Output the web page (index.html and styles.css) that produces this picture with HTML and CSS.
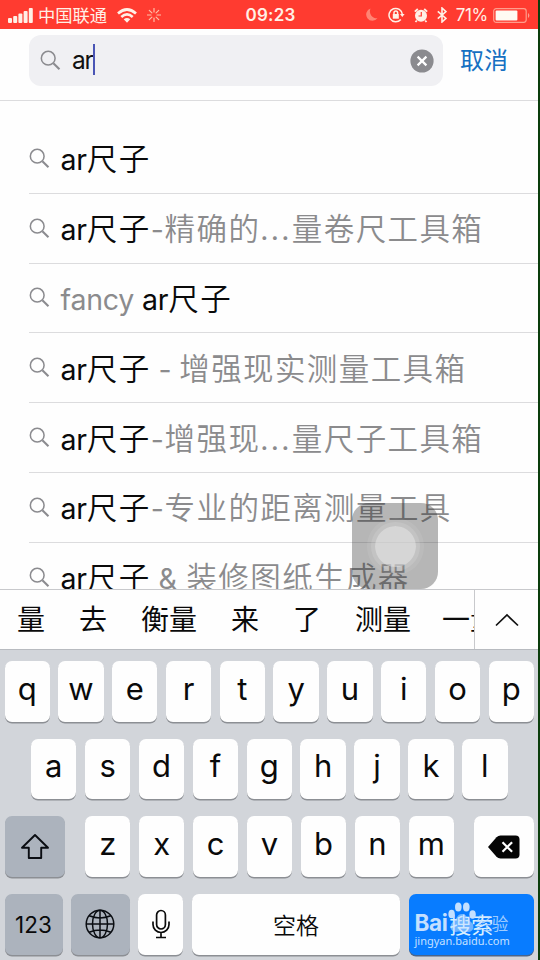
FILE: index.html
```html
<!DOCTYPE html>
<html lang="zh-CN">
<head>
<meta charset="utf-8">
<title>搜索</title>
<link rel="stylesheet" href="styles.css">
</head>
<body>
<svg class="defs" width="0" height="0"><symbol id="mag" viewBox="0 0 22 22"><circle cx="8.600" cy="8.600" r="7.200" fill="none" stroke="#8b8b8f" stroke-width="1.600"/><path d="M14 14l6.400 6.200" stroke="#8b8b8f" stroke-width="2.200" fill="none"/></symbol></svg>
<div class="phone">
  <header class="status">
    <div class="left">
      <svg class="signal" width="25" height="15" viewBox="0 0 25 15" fill="#fff0e6"><rect x="0" y="10" width="4" height="5" rx="1"/><rect x="5.200" y="8" width="4" height="7" rx="1"/><rect x="10.400" y="5.500" width="4" height="9.500" rx="1"/><rect x="15.600" y="3" width="4" height="12" rx="1"/><rect x="20.800" y="0" width="4" height="15" rx="1"/></svg>
      <span class="carrier">中国联通</span>
      <svg class="wifi" width="20" height="15" viewBox="0 0 20 15" fill="none" stroke="#fff0e6" stroke-width="2.700"><path d="M1 5.500Q10-2.500 19 5.500M4.300 8.900Q10 4 15.700 8.900"/><path d="M6.700 11.300Q10 8.600 13.300 11.300L10 14.800z" fill="#fff0e6" stroke="none"/></svg>
      <svg class="spin" width="14" height="14" viewBox="-7 -7 14 14" stroke="#ffc0a8" stroke-width="1.200" stroke-linecap="round"><path d="M0-3V-6.500M0 3V6.500M3 0H6.500M-3 0H-6.500M2.100-2.100L4.700-4.700M-2.100 2.100L-4.700 4.700M2.100 2.100L4.700 4.700M-2.100-2.100L-4.700-4.700"/></svg>
    </div>
    <div class="time">09:23</div>
    <div class="right">
      <svg class="moon" width="13" height="14" viewBox="0 0 13 14"><path d="M5.500.5A6.300 6.300 0 1 0 12.500 10.300A7 7 0 0 1 5.500.5z" fill="#ff8474"/></svg>
      <svg class="lock" width="17" height="16" viewBox="0 0 17 16" fill="none" stroke="#fff0e6" stroke-width="1.500"><path d="M12.800 12.500A6.700 6.700 0 1 1 14.400 7.500"/><path d="M12 7h4.600l-2.300 3z" fill="#fff0e6" stroke="none"/><rect x="4.800" y="7" width="6" height="4.700" fill="#fff0e6" stroke="none"/><path d="M6 7.300V5.700a1.800 1.800 0 0 1 3.600 0V7.300"/></svg>
      <svg class="alarm" width="14" height="15" viewBox="0 0 14 15"><circle cx="7" cy="7.800" r="6" fill="#fff0e6"/><path d="M.8 3.700L3.800 1M13.200 3.700L10.200 1M2.800 12.500L1.500 14M11.200 12.500L12.500 14" stroke="#fff0e6" stroke-width="1.800"/><path d="M7.300 4V8H4.500" fill="none" stroke="#ff3b30" stroke-width="1.200"/></svg>
      <svg class="bt" width="10" height="16" viewBox="0 0 10 16" fill="none" stroke="#fff0e6" stroke-width="1.600"><path d="M.8 4.300L9 11.400L5 15V1L9 4.600L.8 11.700"/></svg>
      <span class="pct">71%</span>
      <svg class="batt" width="38" height="15" viewBox="0 0 38 15"><rect x=".7" y=".7" width="32.500" height="13.600" rx="2.500" fill="none" stroke="#ff9d8c" stroke-width="1.200"/><rect x="2.600" y="2.600" width="21.800" height="9.800" rx="1" fill="#fffaf2"/><path d="M35 5a3 3 0 0 1 0 5z" fill="#ff9d8c"/></svg>
    </div>
  </header>
  <div class="search">
    <div class="field">
      <svg class="mag"><use href="#mag"/></svg>
      <span class="query">ar</span><i class="caret"></i>
      <svg class="clear" width="24" height="24" viewBox="0 0 24 24"><circle cx="12" cy="12" r="11.600" fill="#8b8b8f"/><path d="M7.600 7.600l8.800 8.800M16.400 7.600l-8.800 8.800" stroke="#fff" stroke-width="2.200"/></svg>
    </div>
    <div class="cancel">取消</div>
  </div>
  <main class="results">
    <div class="row"><svg class="mag"><use href="#mag"/></svg><p><b>ar<span>尺子</span></b></p></div>
    <div class="row"><svg class="mag"><use href="#mag"/></svg><p><b>ar<span>尺子</span></b><em class="dash">-</em><span>精确的</span><em class="dots">...</em><span>量卷尺工具箱</span></p></div>
    <div class="row"><svg class="mag"><use href="#mag"/></svg><p><em class="word">fancy</em> <b>ar<span>尺子</span></b></p></div>
    <div class="row"><svg class="mag"><use href="#mag"/></svg><p><b>ar<span>尺子</span></b> <em>-</em> <span>增强现实测量工具箱</span></p></div>
    <div class="row"><svg class="mag"><use href="#mag"/></svg><p><b>ar<span>尺子</span></b><em class="dash">-</em><span>增强现</span><em class="dots">...</em><span>量尺子工具箱</span></p></div>
    <div class="row"><svg class="mag"><use href="#mag"/></svg><p><b>ar<span>尺子</span></b><em class="dash">-</em><span>专业的距离测量工具</span></p></div>
    <div class="row"><svg class="mag"><use href="#mag"/></svg><p><b>ar<span>尺子</span></b> <em class="amp">&amp;</em> <span>装修图纸生成器</span></p></div>
  </main>
  <div class="candidates">
    <div class="words"><span>量</span><span>去</span><span>衡量</span><span>来</span><span>了</span><span>测量</span><span class="last">一量</span></div>
    <div class="expand"><svg width="24" height="14" viewBox="0 0 24 14" fill="none" stroke="#111" stroke-width="1.700"><path d="M1 12.500L12 2L23 12.500"/></svg></div>
  </div>
  <div class="keyboard">
    <div class="keys"><div class="key">q</div><div class="key">w</div><div class="key">e</div><div class="key">r</div><div class="key">t</div><div class="key">y</div><div class="key">u</div><div class="key">i</div><div class="key">o</div><div class="key">p</div></div>
    <div class="keys home"><div class="key">a</div><div class="key">s</div><div class="key">d</div><div class="key">f</div><div class="key">g</div><div class="key">h</div><div class="key">j</div><div class="key">k</div><div class="key">l</div></div>
    <div class="keys lower">
      <div class="key dark shift"><svg width="30" height="27" viewBox="0 0 30 27" fill="none" stroke="#0a0d12" stroke-width="1.900" stroke-linejoin="round"><path d="M15 2L28 14.800H21.200V25H8.800V14.800H2z"/></svg></div>
      <div class="key">z</div><div class="key">x</div><div class="key">c</div><div class="key">v</div><div class="key">b</div><div class="key">n</div><div class="key">m</div>
      <div class="key del"><svg width="32" height="24" viewBox="0 0 32 24"><path d="M0 12L8.500 2.200Q10.200.5 12.500.5H27.500Q31.500.5 31.500 4.500V19.500Q31.500 23.500 27.500 23.500H12.500Q10.200 23.500 8.500 21.800z" fill="#050505"/><path d="M14.500 7.200l9.600 9.600M24.100 7.200l-9.600 9.600" stroke="#fff" stroke-width="2.200"/></svg></div>
    </div>
    <div class="keys bottom">
      <div class="key dark num">123</div>
      <div class="key dark globe"><svg width="30" height="30" viewBox="0 0 30 30" fill="none" stroke="#0a0d12" stroke-width="1.500"><circle cx="15" cy="15" r="13.800"/><ellipse cx="15" cy="15" rx="7.500" ry="13.800"/><path d="M15 1V29M1 15H29M4.200 6.800Q15 11.200 25.800 6.800M4.200 23.200Q15 18.800 25.800 23.200"/></svg></div>
      <div class="key mic"><svg width="18" height="30" viewBox="0 0 18 30" fill="none" stroke="#0a0a0a" stroke-width="1.700"><rect x="4.600" y="1.500" width="8.800" height="18.500" rx="4.400"/><path d="M1 12.500V15.500a8 8 0 0 0 16 0V12.500M9 23.500V28.500M4 28.500H14"/></svg></div>
      <div class="key space">空格</div>
      <div class="key go">搜索
        <div class="mark">
          <div class="brand"><span>Bai</span><svg width="28" height="31" viewBox="0 0 28 31" fill="#c4e0ff"><ellipse cx="3.600" cy="12" rx="3.200" ry="4.300"/><ellipse cx="10.300" cy="5" rx="3.300" ry="4.600"/><ellipse cx="18.300" cy="5" rx="3.300" ry="4.600"/><ellipse cx="24.600" cy="12.500" rx="3.200" ry="4.300"/><path d="M14 12c5 0 5 5 9 8s3 10-3 10c-4 0-8-1-12 0c-6 0-7-7-3-10s4-8 9-8z" opacity=".55"/></svg><span class="cn">经验</span></div>
          <div class="url">jingyan.baidu.com</div>
        </div>
      </div>
    </div>
  </div>
  <div class="assist"><i></i></div>
</div>
</body>
</html>
```
FILE: styles.css
```css
* { box-sizing: border-box; }
body { margin: 0; background: #0b3d0c; font-family: Inter, "Noto Sans CJK SC", sans-serif; }
.defs { position: absolute; }
svg { display: block; flex: none; }
.phone { position: relative; width: 538px; height: 960px; background: #fefefe; overflow: hidden; display: flex; flex-direction: column; }

.status { height: 29px; flex: none; background: #ff3b30; color: #fff0e6; display: grid; grid-template-columns: 200px 1fr 200px; align-items: center; font-size: 17px; }
.left { display: flex; align-items: center; padding-left: 8px; }
.carrier { margin-left: 5px; font-size: 17.3px; line-height: 29px; padding-top: 1px; }
.wifi { margin-left: 10px; }
.spin { margin-left: 10px; }
.time { text-align: center; font-weight: 600; font-size: 17px; letter-spacing: .2px; padding-left: 3px; }
.right { display: flex; align-items: center; justify-content: flex-end; padding-right: 7px; }
.lock { margin-left: 10px; }
.alarm { margin-left: 9px; }
.bt { margin-left: 9px; }
.pct { margin-left: 9px; font-size: 17px; letter-spacing: -.3px; }
.batt { margin-left: 5px; }

.search { height: 72px; flex: none; border-bottom: 1px solid #dcdcde; padding: 6px 0 0 29px; display: flex; }
.field { width: 414px; height: 51px; border-radius: 12px; background: #f0f0f3; display: flex; align-items: center; padding: 0 9px 0 11px; }
.field .mag { width: 21px; height: 21px; }
.query { font-size: 24.5px; letter-spacing: -1.2px; margin-left: 11px; margin-top: -2px; color: #111; }
.caret { width: 2.5px; height: 31px; background: #4a55b5; margin-top: -2px; }
.clear { margin-left: auto; }
.cancel { margin-left: 17px; line-height: 51px; font-size: 24px; color: #1670c2; }

.results { height: 488px; flex: none; overflow: hidden; padding: 23px 0 0 29px; }
.row { height: 69.8px; border-bottom: 1px solid #dcdcde; display: flex; align-items: center; }
.row .mag { width: 21px; height: 21px; margin-left: -.5px; }
.row p { margin: 3px 0 0 11px; font-size: 28.5px; line-height: 60px; letter-spacing: -.2px; color: #8b8b8d; white-space: nowrap; font-weight: 400; }
.row b { font-weight: 400; color: #0a0a0a; }
.row span { font-size: 30.500px; letter-spacing: 1.400px; font-weight: 350; }
.row em { font-style: normal; }
.row em.word { letter-spacing: -.2px; }
.row em.dash { padding-right: 1px; }
.row em.amp { padding-right: 2px; }
.row em.dots { letter-spacing: 2.300px; }

.candidates { height: 60px; flex: none; border-top: 1px solid #c8c9cc; background: #fefefe; display: flex; }
.words { width: 475px; padding-left: 17px; display: flex; gap: 34px; overflow: hidden; font-size: 28px; line-height: 61px; color: #0a0a0a; white-space: nowrap; border-right: 1px solid #c8c9cc; }
.last { margin-left: -3px; }
.expand { flex: 1; display: flex; align-items: center; justify-content: center; }

.keyboard { flex: 1; background: #d2d5da; border-top: 1px solid #b8bbc0; padding: 11px 4px 0 4.500px; display: flex; flex-direction: column; gap: 17px; }
.keys { display: flex; gap: 8.500px; height: 60.700px; flex: none; }
.home { padding: 0 26.500px; }
.key { flex: 1 1 0; min-width: 0; height: 60.500px; border-radius: 7px; background: #fefefe; box-shadow: 0 1.500px 0 #8c8f94; color: #0a0a0a; display: flex; align-items: center; justify-content: center; font-size: 31px; font-weight: 400; padding-bottom: 6px; }
.dark { background: #acb3bd; }
.shift, .del { flex: 0 0 60px; padding-bottom: 0; }
.shift { margin-right: 12px; }
.del { margin-left: 11.500px; padding-left: 1px; }
.num { flex: 0 0 58px; font-size: 22.500px; font-weight: 400; padding: 1px 0 0; }
.globe { flex: 0 0 58.700px; padding: 0; }
.mic { flex: 0 0 45.300px; padding: 0; }
.space { font-size: 23px; font-weight: 350; padding: 0; }
.go { position: relative; flex: 0 0 125.500px; background: #087cff; color: #d9f0ff; font-size: 22px; font-weight: 400; padding: 0 0 2px; box-shadow: 0 1.500px 0 #48658c; }
.mark { position: absolute; left: 6px; top: 8px; color: #c4e0ff; }
.brand { display: flex; align-items: flex-end; height: 31px; font-size: 22.500px; font-weight: 700; line-height: 20px; letter-spacing: -.3px; }
.cn { font-size: 16.500px; font-weight: 400; line-height: 18px; opacity: .8; }
.url { font: 11px/14px "Noto Sans", sans-serif; margin-top: 1px; white-space: nowrap; }

.assist { position: absolute; left: 352px; top: 503px; width: 86px; height: 86px; border-radius: 17px; background: rgba(50, 50, 50, .35); display: flex; align-items: center; justify-content: center; }
.assist i { width: 41px; height: 41px; border-radius: 50%; background: rgba(235, 235, 235, .6); box-shadow: 0 0 0 4px rgba(255, 255, 255, .12), 0 0 0 8px rgba(255, 255, 255, .08); }
```
